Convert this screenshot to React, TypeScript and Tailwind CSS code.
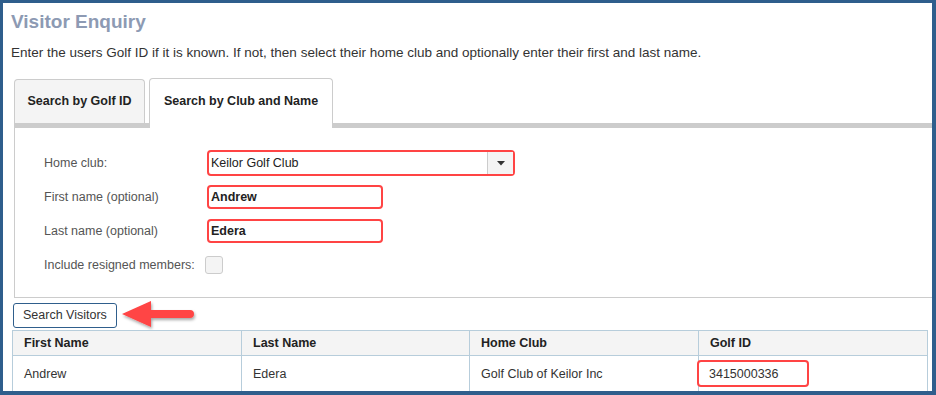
import React from "react";

const rows = [
  { first: "Andrew", last: "Edera", club: "Golf Club of Keilor Inc", id: "3415000336" },
];

function Arrow() {
  return (
    <svg width="80" height="30" viewBox="0 0 80 30" className="absolute left-[117px] top-[297px]">
      <defs>
        <filter id="sh" x="-20%" y="-30%" width="140%" height="160%">
          <feDropShadow dx="1" dy="2" stdDeviation="1.5" floodColor="#000" floodOpacity="0.35" />
        </filter>
      </defs>
      <g filter="url(#sh)" fill="#ff4444">
        <path d="M2 14 L31 1 L31 10 L70 10 A4 4 0 0 1 70 18 L31 18 L31 27 Z" />
      </g>
    </svg>
  );
}

export default function App() {
  return (
    <div
      className="relative w-[936px] h-[395px] overflow-hidden bg-white border-[#2f5e8c] border-t-[3px] border-l-[3px] border-r-[4px] border-b-[4px] text-[#333]"
      style={{ fontFamily: '"Liberation Sans", Arial, sans-serif' }}
    >
      <div className="pl-[8px] pt-[7px]">
        <h1 className="text-[19px] font-bold leading-[24px] text-[#8d9ab3]">Visitor Enquiry</h1>
        <p className="mt-[11px] text-[13.5px] leading-[16px] text-[#333]">
          Enter the users Golf ID if it is known. If not, then select their home club and optionally enter their first and last name.
        </p>
      </div>

      <div className="ml-[11px] mt-[18px]">
        <div className="flex items-end gap-[4px] h-[44px]">
          <div className="w-[131px] h-[44px] border border-b-0 border-[#ccc] rounded-t-[4px] bg-[#f4f4f4] flex items-center justify-center text-[12.5px] font-bold text-[#222]">
            Search by Golf ID
          </div>
          <div className="relative w-[182px] h-[44px] border border-b-0 border-[#ccc] rounded-t-[4px] bg-white flex items-center justify-center text-[12.5px] font-bold text-[#222] z-10 -mb-[5px] pb-[5px] box-content">
            Search by Club and Name
          </div>
        </div>
        <div className="h-[5px] bg-[#cccccc]" />
        <div className="h-[170px] border-l border-b border-[#cccccc] pl-[29px] pt-[22px] text-[12.5px] text-[#555]">
          <div className="flex items-center h-[26px]">
            <span className="w-[163px]">Home club:</span>
            <div className="w-[308px] h-[26px] border-[2.5px] border-[#ff4444] rounded-[4px] flex items-center bg-white">
              <span className="flex-1 pl-[2px] text-[#222]">Keilor Golf Club</span>
              <div className="w-[26px] h-full bg-[#f4f4f4] border-l border-[#ccc] flex items-center justify-center">
                <svg width="8" height="5" viewBox="0 0 8 5">
                  <path d="M0 0 L8 0 L4 4.5 Z" fill="#333" />
                </svg>
              </div>
            </div>
          </div>
          <div className="flex items-center h-[26px] mt-[8px]">
            <span className="w-[163px]">First name (optional)</span>
            <div className="w-[176px] h-[24px] border-[2.5px] border-[#ff4444] rounded-[4px] flex items-center pl-[2px] font-bold text-[#222]">
              Andrew
            </div>
          </div>
          <div className="flex items-center h-[26px] mt-[8px]">
            <span className="w-[163px]">Last name (optional)</span>
            <div className="w-[176px] h-[24px] border-[2.5px] border-[#ff4444] rounded-[4px] flex items-center pl-[2px] font-bold text-[#222]">
              Edera
            </div>
          </div>
          <div className="flex items-center h-[26px] mt-[8px]">
            <span className="w-[161px]">Include resigned members:</span>
            <div className="w-[18px] h-[18px] border border-[#ccc] rounded-[3px] bg-[#f4f4f4]" />
          </div>
        </div>
      </div>

      <div className="ml-[10px] mt-[4px]">
        <button className="h-[25px] px-[9px] border border-[#2f5e8c] rounded-[3px] bg-white text-[12.5px] text-[#333]">
          Search Visitors
        </button>
      </div>

      <div className="ml-[9px] mt-[2px] mr-[4px] border-l border-[#b7cddb]">
        <div className="grid grid-cols-[229px_228px_229px_229px_1fr] bg-[#f4f4f4] border-y border-[#b7cddb] h-[26px] text-[12.5px] font-bold text-[#222]">
          <div className="flex items-center pl-[11px] border-r border-[#b7cddb]">First Name</div>
          <div className="flex items-center pl-[11px] border-r border-[#b7cddb]">Last Name</div>
          <div className="flex items-center pl-[11px] border-r border-[#b7cddb]">Home Club</div>
          <div className="flex items-center pl-[11px] border-r border-[#b7cddb]">Golf ID</div>
          <div />
        </div>
        {rows.map((r) => (
          <div key={r.id} className="grid grid-cols-[229px_228px_229px_229px_1fr] h-[36px] text-[12.5px] text-[#333]">
            <div className="flex items-center pl-[11px] border-r border-[#b7cddb]">{r.first}</div>
            <div className="flex items-center pl-[11px] border-r border-[#b7cddb]">{r.last}</div>
            <div className="flex items-center pl-[11px] border-r border-[#b7cddb]">{r.club}</div>
            <div className="flex items-center -ml-[2px] border-r border-[#b7cddb]">
              <div className="w-[112px] h-[27px] border-[2.5px] border-[#ff4444] rounded-[4px] flex items-center pl-[10px]">
                {r.id}
              </div>
            </div>
            <div />
          </div>
        ))}
      </div>

      <Arrow />
    </div>
  );
}
